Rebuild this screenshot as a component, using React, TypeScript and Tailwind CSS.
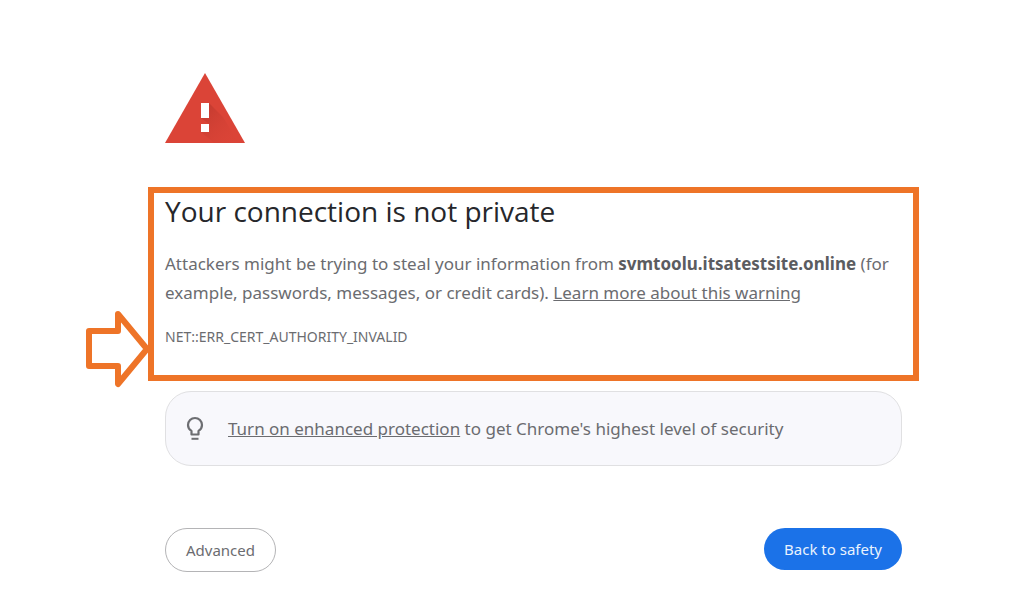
function WarningTriangle() {
  return (
    <svg viewBox="0 0 82 72" className="h-[72px] w-[82px]" role="img" aria-label="Warning">
      <defs>
        <linearGradient id="shade" x1="0" y1="0" x2="1" y2="1">
          <stop offset="0" stopColor="#b5352b" stopOpacity="0.75" />
          <stop offset="1" stopColor="#db4437" stopOpacity="0" />
        </linearGradient>
      </defs>
      <path d="M41 1 81 71H1Z" fill="#db4437" />
      <path d="M45 31 59 45 65 55 75 71H50L37 60H45V52L37 46H45Z" fill="url(#shade)" />
      <path d="M37 31h8v15h-8zM37 52h8v8h-8z" fill="#fff" />
    </svg>
  );
}

function PointerArrow() {
  return (
    <svg
      viewBox="0 0 66 78"
      className="absolute top-[117px] -left-[69px] h-[78px] w-[66px]"
      fill="none"
      stroke="#ee7428"
      strokeWidth="6"
      strokeLinejoin="round"
      aria-hidden="true"
    >
      <path d="M4 21H33V4L62 39 33 74V56H4Z" />
    </svg>
  );
}

function Bulb() {
  return (
    <svg viewBox="0 0 18 25" className="h-[25px] w-[18px] shrink-0" fill="none" aria-hidden="true">
      <path
        d="M5.500 18.500V14.900C3.300 13.600 2 11.500 2 9a7 7 0 0 1 14 0c0 2.500-1.300 4.600-3.500 5.900v3.600Z"
        stroke="#6d6e72"
        strokeWidth="2.200"
        strokeLinejoin="round"
      />
      <path d="M5.500 22.800h7" stroke="#6d6e72" strokeWidth="2" />
    </svg>
  );
}

export default function App() {
  return (
    <main className="min-h-screen bg-white pt-[72px] pr-[105px] pb-9 pl-[148px] font-['Noto_Sans','Open_Sans',sans-serif] text-[#6b6c70]">
      <div className="pl-4">
        <WarningTriangle />
      </div>

      <section className="relative mt-[43px] border-6 border-[#ee7428] px-[11px] pb-7">
        <PointerArrow />
        <h1 className="font-['Open_Sans','Noto_Sans',sans-serif] text-[28px] leading-9 text-[#26272b]">
          Your connection is not private
        </h1>
        <p className="mt-5 text-[17px] leading-[29px]">
          Attackers might be trying to steal your information from{" "}
          <strong className="font-bold text-[#5b5c60]">svmtoolu.itsatestsite.online</strong> (for
          example, passwords, messages, or credit cards).{" "}
          <a href="#learn-more" className="underline">
            Learn more about this warning
          </a>
        </p>
        <p className="mt-5 text-[14px] leading-5">NET::ERR_CERT_AUTHORITY_INVALID</p>
      </section>

      <div className="mt-[10px] mr-[17px] ml-[17px] flex items-center gap-6 rounded-[26px] border border-[#e0e0e2] bg-[#f8f8fc] px-5 py-[22px]">
        <Bulb />
        <p className="text-[17px] leading-[29px]">
          <a href="#enhanced-protection" className="underline">
            Turn on enhanced protection
          </a>{" "}
          to get Chrome's highest level of security
        </p>
      </div>

      <div className="mx-[17px] mt-[62px] flex items-start justify-between">
        <button
          type="button"
          className="h-11 rounded-full border border-[#b4b4b6] bg-white px-5 text-[15px]"
        >
          Advanced
        </button>
        <button type="button" className="h-[42px] rounded-full bg-[#1b72e8] px-5 text-[15px] text-[#e9f2fe]">
          Back to safety
        </button>
      </div>
    </main>
  );
}
